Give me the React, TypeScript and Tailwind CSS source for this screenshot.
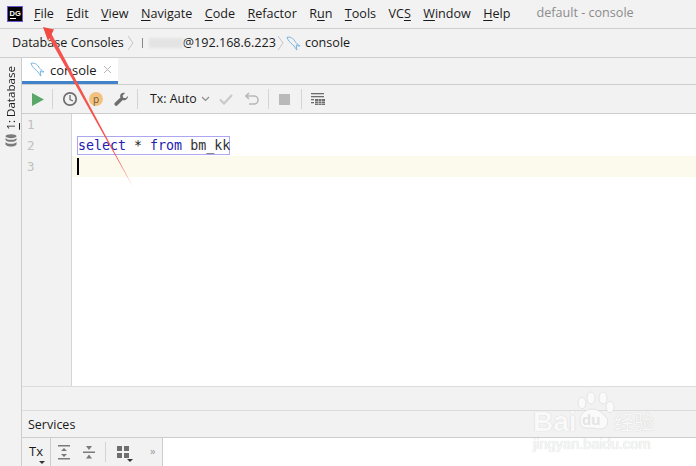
import React from "react";

const ui = { fontFamily: '"Open Sans","Noto Sans",sans-serif' };

function U({ children }: { children: React.ReactNode }) {
  return <span className="underline underline-offset-2 decoration-1">{children}</span>;
}

function Dolphin({ className = "" }: { className?: string }) {
  return (
    <svg viewBox="0 0 16 16" className={className} fill="none" stroke="#74b1de" strokeWidth="1">
      <path d="M1 1.500C4 .5 7.500 2 9.500 5.500c1 2 3 3.500 5.500 5-1.500.5-3 0-4-1l.5 5.500C10 13 9 10.500 7 9 4.500 7.500 2.500 5 1 1.500z" />
    </svg>
  );
}

function Sep() {
  return <div className="w-px h-[20px] bg-[#d4d4d4] mx-[8px]" />;
}

const menu: React.ReactNode[] = [
  <><U>F</U>ile</>,
  <><U>E</U>dit</>,
  <><U>V</U>iew</>,
  <><U>N</U>avigate</>,
  <><U>C</U>ode</>,
  <><U>R</U>efactor</>,
  <>R<U>u</U>n</>,
  <><U>T</U>ools</>,
  <>VC<U>S</U></>,
  <><U>W</U>indow</>,
  <><U>H</U>elp</>,
];

const wm = { textShadow: "0 0 1px #c4c4c4" };

export default function App() {
  return (
    <div className="relative w-[696px] h-[466px] overflow-hidden bg-[#f2f2f2] flex flex-col text-[12.600px] text-[#1a1a1a]" style={ui}>
      {/* menu bar */}
      <div className="h-[29px] shrink-0 border-b border-[#cdcdcd] flex items-center pl-[7px]">
        <svg width="16" height="16" viewBox="0 0 16 16" className="shrink-0 mb-[1px]">
          <rect x="0.5" y="0.5" width="15" height="15" fill="#000" stroke="#6b57d2" />
          <rect x="3" y="12" width="6" height="1" fill="#fff" />
          <text x="2.5" y="9.5" fontSize="7.5" fontWeight="700" fill="#fff" fontFamily="Liberation Sans">DG</text>
        </svg>
        <div className="flex ml-[11px] gap-[12.400px] whitespace-nowrap leading-[28px]">
          {menu.map((m, i) => (
            <span key={i}>{m}</span>
          ))}
        </div>
        <span className="ml-[26px] text-[#8c8c8c] mb-[2px] whitespace-nowrap">default - console</span>
      </div>

      {/* breadcrumb */}
      <div className="h-[29px] shrink-0 border-b border-[#cdcdcd] flex items-center pl-[12px] whitespace-nowrap">
        <span>Database Consoles</span>
        <svg width="8" height="16" viewBox="0 0 8 16" className="mx-[3px]" fill="none" stroke="#c6c6c6"><path d="M1 1l5 7-5 7" /></svg>
        <span className="ml-[4px] w-[1px] h-[10px] bg-[#888]" />
        <span className="w-[34px] h-[10px] bg-[#e4e4e4] blur-[1px] ml-[6px]" />
        <span>@192.168.6.223</span>
        <svg width="8" height="16" viewBox="0 0 8 16" className="mx-[1px]" fill="none" stroke="#c6c6c6"><path d="M1 1l5 7-5 7" /></svg>
        <Dolphin className="w-[15px] h-[15px] mr-[4px]" />
        <span>console</span>
      </div>

      <div className="flex-1 flex min-h-0">
        {/* left stripe */}
        <div className="w-[22px] shrink-0 border-r border-[#cdcdcd] flex flex-col items-center pt-[8px]">
          <div className="[writing-mode:vertical-rl] rotate-180 text-[11.600px] leading-[14px] whitespace-nowrap ml-[1px]">
            <U>1</U>: Database
          </div>
          <svg width="12" height="13" viewBox="0 0 12 13" className="mt-[4px]" fill="#7a7a7a">
            <ellipse cx="6" cy="2.2" rx="5.5" ry="2" />
            <path d="M.5 4c1 1.300 3 1.800 5.500 1.800S10.500 5.300 11.500 4v2c-1 1.300-3 1.800-5.500 1.800S1.500 7.300.5 6z" />
            <path d="M.5 8c1 1.300 3 1.800 5.500 1.800S10.500 9.300 11.500 8v2.500c-1 1.500-3 2-5.500 2s-4.500-.5-5.500-2z" />
          </svg>
        </div>

        <div className="flex-1 min-w-0 flex flex-col">
          {/* tabs */}
          <div className="h-[27px] shrink-0 border-b border-[#cdcdcd] flex">
            <div className="w-[96px] h-[26px] bg-white border-b-[3px] border-[#4083c9] flex items-center pl-[8px]">
              <Dolphin className="w-[15px] h-[15px] mr-[5px]" />
              <span className="leading-none mt-[2px] text-[13px]">console</span>
              <svg width="9" height="9" viewBox="0 0 9 9" className="ml-[6px]" stroke="#b5b5b5" fill="none"><path d="M1 1l7 7M8 1L1 8" /></svg>
            </div>
          </div>

          {/* toolbar */}
          <div className="h-[29px] shrink-0 border-b border-[#cdcdcd] flex items-center pl-[10px]">
            <svg width="13" height="13" viewBox="0 0 13 13"><path d="M0 0l12 6.500L0 13z" fill="#59a869" /></svg>
            <div className="w-px h-[20px] bg-[#d4d4d4] ml-[7px] mr-[9px]" />
            <svg width="16" height="16" viewBox="0 0 16 16" fill="none" stroke="#6e6e6e" strokeWidth="1.700"><circle cx="8" cy="8" r="6.200" /><path d="M8 4v4.500l3 1.500" strokeWidth="1.300" /></svg>
            <div className="ml-[11px] w-[14px] h-[14px] rounded-full bg-[#f4c27f] flex items-center justify-center text-[10px] leading-none text-[#6b5a3a]">p</div>
            <svg width="15" height="15" viewBox="0 0 16 16" className="ml-[11px]" fill="#6e6e6e"><path d="M15 4.200l-2.800 2.500-2.400-.6-.6-2.400L11.800 1C9.800.2 7.600.900 6.800 2.900c-.4 1-.3 2 0 2.900L1 11.500c-.8.800-.8 1.900 0 2.700s2 .8 2.700 0l5.700-5.700c1 .3 2 .3 2.900-.1 2-.8 3-3.100 2.700-5.200z" /></svg>
            <Sep />
            <span className="ml-[4px] text-[12.300px] leading-none whitespace-nowrap">Tx: Auto</span>
            <svg width="9" height="6" viewBox="0 0 9 6" className="ml-[4px]" fill="none" stroke="#8c8c8c" strokeWidth="1.200"><path d="M1 1l3.500 3.500L8 1" /></svg>
            <svg width="14" height="12" viewBox="0 0 14 12" className="ml-[9px]" fill="none" stroke="#c9c9c9" strokeWidth="2.200"><path d="M1 6.500l4 4L13 2" /></svg>
            <svg width="14" height="14" viewBox="0 0 14 14" className="ml-[12px]" fill="none" stroke="#b9b9b9" strokeWidth="1.600"><path d="M4 1L1 4l3 3M1.500 4H9a4 4 0 010 8H4" /></svg>
            <div className="w-px h-[20px] bg-[#d4d4d4] ml-[9px] mr-[10px]" />
            <div className="w-[11px] h-[11px] bg-[#b9b9b9]" />
            <div className="w-px h-[20px] bg-[#d4d4d4] ml-[11px] mr-[9px]" />
            <svg width="14" height="14" viewBox="0 0 14 14" fill="#6e6e6e">
              <rect x="0" y="1" width="13" height="1.300" />
              <rect x="0" y="4" width="13" height="1.300" />
              <rect x="0" y="7" width="3" height="1.300" />
              <rect x="0" y="10" width="3" height="1.300" />
              <rect x="4" y="7" width="10" height="6" />
              <path d="M4 9h10v.5H4zM4 11h10v.5H4zM7 7h.5v6H7zM10.500 7h.5v6h-.5z" fill="#f2f2f2" />
            </svg>
          </div>

          {/* editor */}
          <div className="flex-1 min-h-0 flex bg-white relative" style={{ fontFamily: '"DejaVu Sans Mono",monospace' }}>
            <div className="w-[50px] shrink-0 bg-[#f2f2f2] border-r border-[#d5d5d5] text-[12.500px] text-[#c0c0c0] pl-[5px] leading-[21px]">
              <div>1</div>
              <div>2</div>
              <div>3</div>
            </div>
            <div className="flex-1 min-w-0 text-[13.300px] leading-[21px]">
              <div className="h-[21px]" />
              <div className="h-[21px] pl-[5px] relative">
                <span className="inline-block h-[19px] leading-[18px] border border-[#aca6f0] whitespace-pre w-[153px]">
                  <span className="text-[#2020b0]">select</span> * <span className="text-[#2020b0]">from</span> <span className="text-[#333]">bm_kk</span>
                </span>
              </div>
              <div className="h-[21px] bg-[#fcfaed] pl-[5px] flex items-center">
                <div className="w-[2px] h-[17px] bg-black" />
              </div>
            </div>
          </div>

          {/* blank strip */}
          <div className="h-[25px] shrink-0 border-y border-[#dcdcdc]" />

          {/* services */}
          <div className="h-[27px] shrink-0 border-b border-[#cdcdcd] flex items-center pl-[6px] pt-[2px] text-[12.500px]">Services</div>

          {/* bottom toolbar */}
          <div className="h-[28px] shrink-0 bg-white flex">
            <div className="w-[141px] bg-[#f2f2f2] border-r border-[#cdcdcd] flex items-center">
              <div className="w-[29px] h-full border-r border-[#cdcdcd] relative pl-[7px] pt-[4px] text-[13px] leading-[18px]">
                Tx
                <span className="absolute left-[17px] bottom-[2px] w-0 h-0 border-x-[3px] border-x-transparent border-t-[3px] border-t-[#333]" />
              </div>
              <svg width="14" height="15" viewBox="0 0 14 15" className="ml-[6px]" fill="#7a7a7a">
                <rect x="1" y="0" width="12" height="1.500" />
                <rect x="1" y="13" width="12" height="1.500" />
                <path d="M7 3l3 3H4zM7 12l-3-3h6z" />
              </svg>
              <svg width="14" height="15" viewBox="0 0 14 15" className="ml-[11px]" fill="#7a7a7a">
                <rect x="1" y="6.500" width="12" height="1.500" />
                <path d="M7 5L4 1h6zM7 9.500l3 4H4z" />
              </svg>
              <div className="w-px h-[20px] bg-[#d4d4d4] ml-[9px] mr-[11px]" />
              <div className="relative w-[12px] h-[12px] grid grid-cols-2 gap-[2px]">
                <div className="bg-[#6e6e6e]" />
                <div className="bg-[#6e6e6e]" />
                <div className="bg-[#6e6e6e]" />
                <div className="bg-[#6e6e6e]" />
                <span className="absolute -right-[4px] -bottom-[4px] w-0 h-0 border-x-[3px] border-x-transparent border-t-[3px] border-t-[#333]" />
              </div>
              <span className="ml-[21px] text-[#9a9a9a] text-[11px] leading-none mb-[3px]">»</span>
            </div>
          </div>
        </div>
      </div>

      {/* red arrow annotation */}
      <svg className="absolute left-0 top-0 pointer-events-none" width="696" height="466" viewBox="0 0 696 466">
        <path d="M133 187L51 33 47.500 35z" fill="#f4534e" />
        <path d="M43 27L54 29.500 48 41z" fill="#f04a44" />
      </svg>

      {/* watermark */}
      <div className="absolute left-[533px] top-[390px] w-[130px] h-[64px] pointer-events-none text-[#f9f9f9]">
        <div className="absolute left-0 top-[16px] text-[28px] leading-[32px] font-bold" style={{ ...wm, fontFamily: '"Liberation Sans",sans-serif' }}>Bai</div>
        <svg className="absolute left-[43px] top-0" width="40" height="42" viewBox="0 0 40 42" fill="#fafafa" stroke="#dedede" strokeWidth="0.800">
          <ellipse cx="6" cy="13" rx="4" ry="5.500" />
          <ellipse cx="15" cy="8" rx="4" ry="6" />
          <ellipse cx="27" cy="8" rx="4" ry="6" />
          <ellipse cx="34" cy="17" rx="4" ry="5.500" />
          <path d="M4 30c0-6 6-11 12-11 7 0 9 4 13 7 5 4 3 13-5 13-4 0-6-1-9-1-6 0-11 1-11-8z" />
        </svg>
        <div className="absolute left-[49px] top-[21px] text-[15px] leading-[18px] font-bold text-[#e4e4e4]" style={{ fontFamily: '"Liberation Sans",sans-serif' }}>du</div>
        <div className="absolute left-[81px] top-[20px] text-[20px] leading-[24px] whitespace-nowrap" style={{ ...wm, fontFamily: '"Noto Sans CJK SC",sans-serif' }}>经验</div>
        <div className="absolute left-0 top-[46px] text-[14.600px] leading-[17px] whitespace-nowrap" style={{ ...wm, fontFamily: '"Liberation Sans",sans-serif' }}>jingyan.baidu.com</div>
      </div>
    </div>
  );
}
